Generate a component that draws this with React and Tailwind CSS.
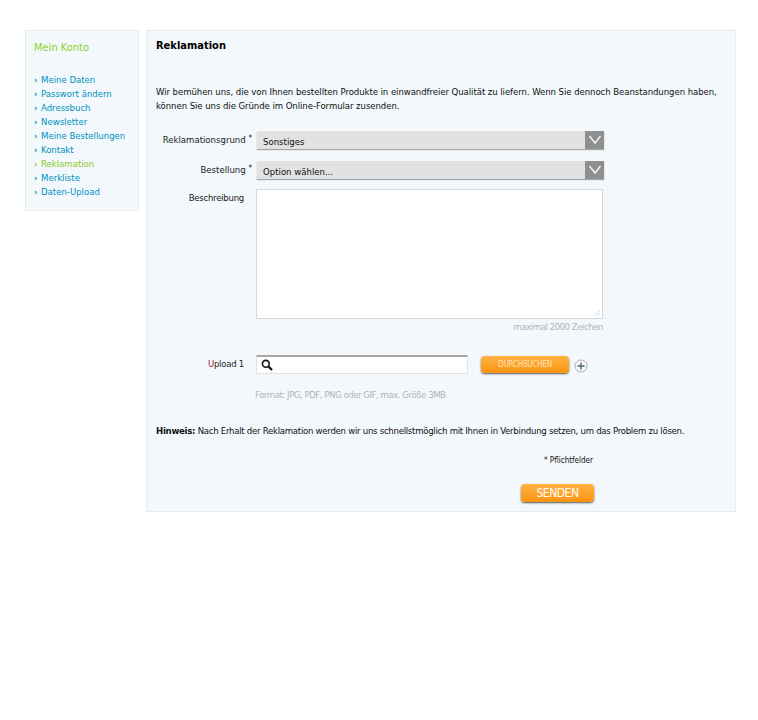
const font = { fontFamily: '"DejaVu Sans Condensed", "DejaVu Sans", Verdana, sans-serif', fontStretch: "condensed" };

const items = ["Meine Daten", "Passwort ändern", "Adressbuch", "Newsletter", "Meine Bestellungen", "Kontakt", "Reklamation", "Merkliste", "Daten-Upload"];

function Chevron() {
  return (
    <svg width="18" height="18" viewBox="0 0 18 18" fill="none">
      <path d="M3.5 5 L9 12 L14.5 5" stroke="#f4f4f4" strokeWidth="1.4" />
    </svg>
  );
}

function Select({ value }) {
  return (
    <div className="flex h-[18px] w-[347px] items-stretch justify-between bg-[#e2e2e2] shadow-[0_1px_1px_#a5a5a5]">
      <span className="pl-[6px] pt-[4px] text-[9.5px] leading-[14px] text-[#111]">{value}</span>
      <span className="flex w-[19px] items-center justify-center bg-[#8f8f8f]"><Chevron /></span>
    </div>
  );
}

function OrangeButton({ children, className = "" }) {
  return (
    <div className={`flex items-center justify-center rounded-[4px] bg-gradient-to-b from-[#ffb340] to-[#fb9305] shadow-[0_1px_2px_#555] ${className}`}>
      {children}
    </div>
  );
}

export default function App() {
  return (
    <div style={font} className="flex h-[720px] w-[758px] items-start gap-[7px] bg-white pl-[25px] pt-[30px]">
      <aside className="h-[181px] w-[114px] shrink-0 border border-[#e6ecee] bg-[#f2f8fb] pl-[8px] pt-[10px]">
        <h2 className="text-[11px] leading-[14px] text-[#8fd02e]">Mein Konto</h2>
        <ul className="mt-[18px]">
          {items.map((t) => (
            <li key={t} className={`flex h-[14px] items-center whitespace-nowrap text-[9.5px] leading-[14px] ${t === "Reklamation" ? "text-[#8fca1e]" : "text-[#0090c0]"}`}>
              <span className="w-[7px] text-[9px] font-bold">›</span>{t}
            </li>
          ))}
        </ul>
      </aside>

      <main className="h-[482px] w-[590px] shrink-0 border border-[#e6ecee] bg-[#f2f8fb] pl-[9px] pt-[7px]">
        <h1 className="text-[11px] font-bold leading-[16px] text-[#000]">Reklamation</h1>
        <p className="mt-[31px] w-[570px] text-[9.5px] leading-[14px] tracking-[-0.06px] text-[#111]">
          Wir bemühen uns, die von Ihnen bestellten Produkte in einwandfreier Qualität zu liefern. Wenn Sie dennoch Beanstandungen haben, können Sie uns die Gründe im Online-Formular zusenden.
        </p>

        <div className="mt-[18px] flex items-start gap-[5px]">
          <div className="w-[96px] shrink-0 whitespace-nowrap pt-[2px] text-right text-[9.5px] leading-[14px] text-[#222]">Reklamationsgrund <span className="relative -top-[2px] text-[8px]">*</span></div>
          <Select value="Sonstiges" />
        </div>
        <div className="mt-[12px] flex items-start gap-[5px]">
          <div className="w-[96px] shrink-0 whitespace-nowrap pt-[2px] text-right text-[9.5px] leading-[14px] text-[#222]">Bestellung <span className="relative -top-[2px] text-[8px]">*</span></div>
          <Select value="Option wählen..." />
        </div>
        <div className="mt-[10px] flex items-start gap-[12px]">
          <div className="mt-[2px] w-[88px] shrink-0 text-right text-[9.5px] leading-[14px] tracking-[-0.25px] text-[#222]">Beschreibung</div>
          <div>
            <div className="relative h-[130px] w-[347px] border border-[#d5d8d8] bg-white">
              <svg className="absolute bottom-[1px] right-[1px]" width="8" height="8" viewBox="0 0 8 8">
                <path d="M7 1 L1 7 M7 4 L4 7" stroke="#b5b5b5" strokeWidth="1" strokeDasharray="1 1" />
              </svg>
            </div>
            <div className="mt-[1px] text-right text-[9.5px] leading-[14px] tracking-[-0.45px] text-[#b4b4b4]">maximal 2000 Zeichen</div>
          </div>
        </div>

        <div className="mt-[21px] flex items-start">
          <div className="mt-[2px] w-[88px] shrink-0 text-right text-[9.5px] leading-[14px] tracking-[-0.25px] text-[#222]"><span className="text-[#b01030]">U</span>pload 1</div>
          <div className="ml-[12px] flex h-[19px] w-[212px] items-center border-x border-b border-t-2 border-x-[#e2e4e4] border-b-[#e2e4e4] border-t-[#a8a8a8] bg-white pl-[4px]">
            <svg width="12" height="13" viewBox="0 0 12 13" fill="none">
              <circle cx="4.8" cy="4.8" r="3.4" stroke="#111" strokeWidth="1.6" />
              <path d="M7.5 7.5 L11 11" stroke="#111" strokeWidth="2.2" />
            </svg>
          </div>
          <OrangeButton className="ml-[13px] mt-[1px] h-[17px] w-[88px] text-[8px] tracking-[-0.2px] text-[#ffe2b8]">DURCHSUCHEN</OrangeButton>
          <svg className="ml-[5px] mt-[4px]" width="14" height="14" viewBox="0 0 14 14" fill="none">
            <circle cx="7" cy="7" r="6" fill="#f7f7f7" stroke="#b0b0b0" />
            <path d="M7 3.5 V10.5 M3.5 7 H10.5" stroke="#3f6474" strokeWidth="1.3" />
          </svg>
        </div>
        <div className="ml-[99px] mt-[14px] text-[9.5px] leading-[14px] tracking-[-0.45px] text-[#b4b4b4]">Format: JPG, PDF, PNG oder GIF, max. Größe 3MB</div>

        <p className="mt-[22px] whitespace-nowrap text-[9.5px] leading-[14px] tracking-[-0.26px] text-[#111]">
          <b>Hinweis:</b> Nach Erhalt der Reklamation werden wir uns schnellstmöglich mit Ihnen in Verbindung setzen, um das Problem zu lösen.
        </p>
        <div className="mt-[16px] w-[437px] text-right text-[8px] leading-[14px] text-[#111]">* Pflichtfelder</div>
        <OrangeButton className="ml-[365px] mt-[16px] h-[18px] w-[73px] text-[12px] tracking-[-0.5px] text-white">SENDEN</OrangeButton>
      </main>
    </div>
  );
}
